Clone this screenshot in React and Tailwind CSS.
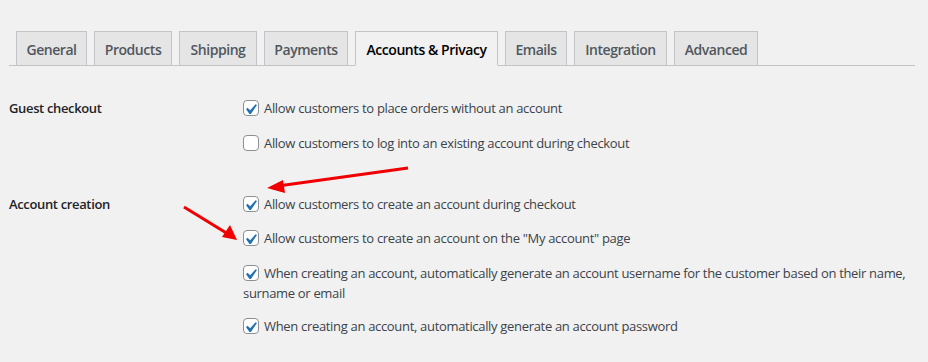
import React from 'react'

const tabs = [
  ['General', 71],
  ['Products', 78],
  ['Shipping', 78],
  ['Payments', 84],
  ['Accounts & Privacy', 143, true],
  ['Emails', 62],
  ['Integration', 93],
  ['Advanced', 84],
]

function Check({ checked }) {
  return (
    <span className="relative inline-block w-4 h-4 mr-[5px] align-[-3px] rounded-[4px] border border-[#8c8f94] bg-white">
      {checked && (
        <svg width="21" height="21" viewBox="0 0 20 20" className="absolute left-[-4px] top-[-2px]">
          <path d="M14.83 4.89l1.34.94-5.81 8.38H9.02L5.78 9.67l1.34-1.25 2.57 2.4z" fill="#2271b1" />
        </svg>
      )}
    </span>
  )
}

function Option({ checked, children }) {
  return (
    <div className="text-[13px] leading-5 tracking-[-0.32px] text-[#3c434a]">
      <Check checked={checked} />
      {children}
    </div>
  )
}

export default function App() {
  return (
    <div className="relative w-[928px] h-[362px] bg-[#f1f1f1] overflow-hidden" style={{ fontFamily: '"Open Sans", "Noto Sans", sans-serif' }}>
      {/* tabs */}
      <div className="ml-[9px] mr-[13px] pt-[31px] flex gap-[7px] pl-[7px] border-b border-[#c3c4c7]">
        {tabs.map(([name, w, active]) => (
          <div
            key={name}
            style={{ width: w }}
            className={
              'h-[35px] -mb-px pt-px border border-[#c3c4c7] flex items-center justify-center text-[14px] font-semibold tracking-[-0.45px] ' +
              (active ? 'bg-[#f1f1f1] border-b-[#f1f1f1] text-black' : 'bg-[#e5e5e5] text-[#50575e]')
            }
          >
            {name}
          </div>
        ))}
      </div>

      {/* settings */}
      <div className="pl-[9px] pt-[32px]">
        <div className="flex">
          <div className="w-[234px] text-[13px] leading-5 font-semibold tracking-[-0.35px] text-[#1d2327]">Guest checkout</div>
          <div className="flex flex-col gap-[15px] w-[672px]">
            <Option checked>Allow customers to place orders without an account</Option>
            <Option>Allow customers to log into an existing account during checkout</Option>
          </div>
        </div>

        <div className="flex mt-[41px]">
          <div className="w-[234px] text-[13px] leading-5 font-semibold tracking-[-0.35px] text-[#1d2327]">Account creation</div>
          <div className="flex flex-col gap-[14px] w-[672px]">
            <Option checked>Allow customers to create an account during checkout</Option>
            <Option checked>Allow customers to create an account on the "My account" page</Option>
            <div className="mt-px">
              <Option checked>
                When creating an account, automatically generate an account username for the customer based on their name, surname or email
              </Option>
            </div>
            <div className="-mt-px">
              <Option checked>When creating an account, automatically generate an account password</Option>
            </div>
          </div>
        </div>
      </div>

      {/* annotation arrows */}
      <svg className="absolute inset-0 pointer-events-none" width="928" height="362">
        <line x1="408" y1="168" x2="278" y2="186" stroke="#f00000" strokeWidth="3" />
        <polygon points="267,188 283,180 285,193" fill="#f00000" />
        <line x1="184" y1="207" x2="228" y2="234" stroke="#f00000" strokeWidth="3" />
        <polygon points="237,240 222,237 230,225" fill="#f00000" />
      </svg>
    </div>
  )
}
